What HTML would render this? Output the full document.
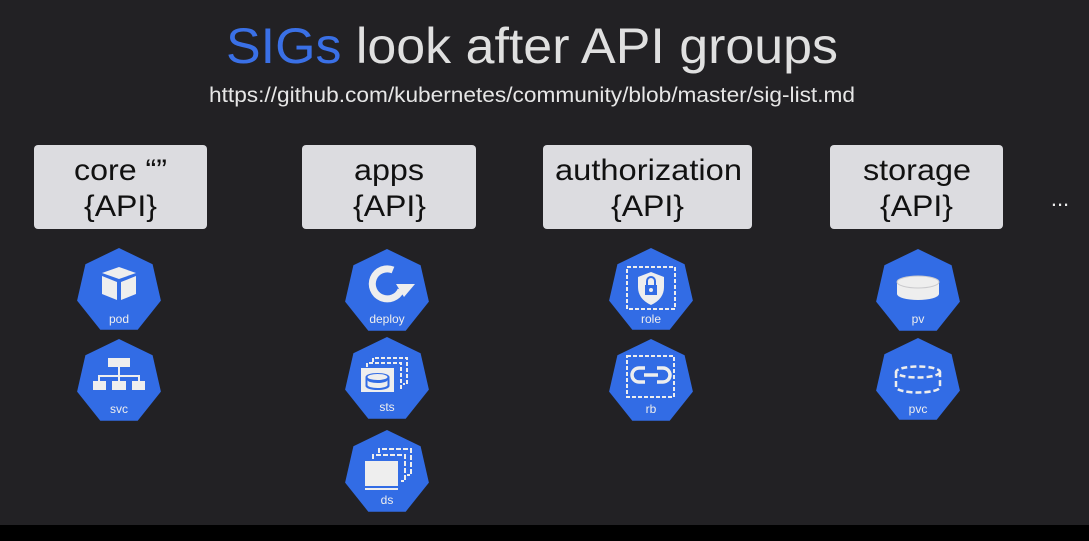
<!DOCTYPE html>
<html><head><meta charset="utf-8"><style>
html,body{margin:0;padding:0;background:#222124;}
svg{display:block}
text{font-family:"Liberation Sans",sans-serif}
</style></head><body>
<svg width="1089" height="541" viewBox="0 0 1089 541" xmlns="http://www.w3.org/2000/svg">
<defs>
<polygon id="h" points="0,-43 33.6,-26.8 41.9,9.6 18.7,38.7 -18.7,38.7 -41.9,9.6 -33.6,-26.8" fill="#326ce5"/>
</defs>
<rect width="1089" height="525" fill="#222124"/>
<rect y="525" width="1089" height="16" fill="#000"/>
<text x="226" y="63" font-size="50" fill="#e0e0e0" textLength="612" lengthAdjust="spacingAndGlyphs"><tspan fill="#3a70e6">SIGs</tspan> look after API groups</text>
<text x="209" y="102" font-size="21" fill="#e6e6e6" textLength="646" lengthAdjust="spacingAndGlyphs">https://github.com/kubernetes/community/blob/master/sig-list.md</text>

<g fill="#dcdce0">
<rect x="34" y="145" width="173" height="84" rx="4"/>
<rect x="302" y="145" width="174" height="84" rx="4"/>
<rect x="543" y="145" width="209" height="84" rx="4"/>
<rect x="830" y="145" width="173" height="84" rx="4"/>
</g>
<g font-size="30" fill="#111">
<text x="74" y="180" textLength="93" lengthAdjust="spacingAndGlyphs">core “”</text><text x="84" y="216" textLength="73" lengthAdjust="spacingAndGlyphs">{API}</text>
<text x="354" y="180" textLength="70" lengthAdjust="spacingAndGlyphs">apps</text><text x="353" y="216" textLength="73" lengthAdjust="spacingAndGlyphs">{API}</text>
<text x="555" y="180" textLength="187" lengthAdjust="spacingAndGlyphs">authorization</text><text x="611" y="216" textLength="73" lengthAdjust="spacingAndGlyphs">{API}</text>
<text x="863" y="180" textLength="108" lengthAdjust="spacingAndGlyphs">storage</text><text x="880" y="216" textLength="73" lengthAdjust="spacingAndGlyphs">{API}</text>
</g>
<text x="1060" y="206" font-size="22" text-anchor="middle" fill="#eee">...</text>

<g font-size="12" text-anchor="middle" fill="#eee">
<!-- pod -->
<g transform="translate(119,291)"><use href="#h"/>
<polygon points="0,-24 17,-18 0,-12 -17,-18" fill="#eee"/>
<polygon points="-17,-15 -2,-9 -2,9 -17,3" fill="#eee"/>
<polygon points="17,-15 2,-9 2,9 17,3" fill="#eee"/>
<text y="32">pod</text></g>
<!-- svc -->
<g transform="translate(119,382)"><use href="#h"/>
<rect x="-11" y="-24" width="22" height="9" fill="#eee"/>
<path d="M0,-15V-6M-20,-1V-6H20V-1M0,-6V-1" stroke="#eee" stroke-width="2" fill="none"/>
<rect x="-26" y="-1" width="13" height="9" fill="#eee"/><rect x="-7" y="-1" width="14" height="9" fill="#eee"/><rect x="13" y="-1" width="13" height="9" fill="#eee"/>
<text y="31">svc</text></g>
<!-- deploy -->
<g transform="translate(387,292)"><use href="#h"/>
<path d="M14,-2 A15,15 0 1 1 6,-22" stroke="#eee" stroke-width="7" fill="none"/>
<polygon points="9,-8 28,-8 17,5" fill="#eee"/>
<text y="31">deploy</text></g>
<!-- sts -->
<g transform="translate(387,380)"><use href="#h"/>
<path d="M-14,-18V-22H20V4H16M-8,-22" stroke="#eee" stroke-width="2" stroke-dasharray="4,2" fill="none"/>
<path d="M-20,-13V-17H14V9" stroke="#eee" stroke-width="2" stroke-dasharray="4,2" fill="none"/>
<rect x="-26" y="-12" width="33" height="24" fill="#eee"/>
<ellipse cx="-9.5" cy="-3" rx="12" ry="4" fill="#326ce5"/>
<path d="M-21.5,-3V6A12,4 0 0 0 2.5,6V-3" fill="#326ce5"/>
<ellipse cx="-9.5" cy="-3" rx="10" ry="3" fill="#eee"/>
<path d="M-19.5,0V5A10,3 0 0 0 0.5,5V0A10,3 0 0 1 -19.5,0" fill="#eee"/>
<text y="31">sts</text></g>
<!-- ds -->
<g transform="translate(387,473)"><use href="#h"/>
<path d="M-8,-20V-24H24V2H20" stroke="#eee" stroke-width="2" stroke-dasharray="5,2" fill="none"/>
<path d="M-14,-14V-18H18V8H14" stroke="#eee" stroke-width="2" stroke-dasharray="5,2" fill="none"/>
<rect x="-22" y="-12" width="33" height="25" fill="#eee"/>
<rect x="-22" y="15" width="33" height="2" fill="#eee"/>
<text y="31">ds</text></g>
<!-- role -->
<g transform="translate(651,291)"><use href="#h"/>
<rect x="-24" y="-24" width="48" height="42" stroke="#eee" stroke-width="2" stroke-dasharray="4,2" fill="none"/>
<path d="M0,-19 L13,-14 V-4 Q13,8 0,14 Q-13,8 -13,-4 V-14Z" fill="#eee"/>
<rect x="-6" y="-6" width="12" height="10" fill="#326ce5"/>
<path d="M-4,-6V-10A4,4 0 0 1 4,-10V-6" stroke="#326ce5" stroke-width="2" fill="none"/>
<circle cx="0" cy="-1" r="2" fill="#eee"/>
<text y="32">role</text></g>
<!-- rb -->
<g transform="translate(651,382)"><use href="#h"/>
<rect x="-24" y="-26" width="47" height="41" stroke="#eee" stroke-width="2" stroke-dasharray="4,2" fill="none"/>
<path d="M-6,-14H-12A7,7 0 0 0 -12,0H-6M6,-14H12A7,7 0 0 1 12,0H6M-7,-7H7" stroke="#eee" stroke-width="3.5" fill="none"/>
<text y="31">rb</text></g>
<!-- pv -->
<g transform="translate(918,292)"><use href="#h"/>
<path d="M-21,-10V2A21,6 0 0 0 21,2V-10" fill="#eee"/>
<ellipse cx="0" cy="-10" rx="21" ry="6" fill="#eee"/>
<ellipse cx="0" cy="-10" rx="21" ry="6" fill="none" stroke="#c9c9cc" stroke-width="1"/>
<text y="31">pv</text></g>
<!-- pvc -->
<g transform="translate(918,381)"><use href="#h"/>
<ellipse cx="0" cy="-9" rx="22" ry="5.5" fill="none" stroke="#eee" stroke-width="2.5" stroke-dasharray="6,3"/>
<path d="M-22,-9V6A22,5.5 0 0 0 22,6V-9" fill="none" stroke="#eee" stroke-width="2.5" stroke-dasharray="6,3"/>
<text y="32">pvc</text></g>
</g>
</svg>
</body></html>
